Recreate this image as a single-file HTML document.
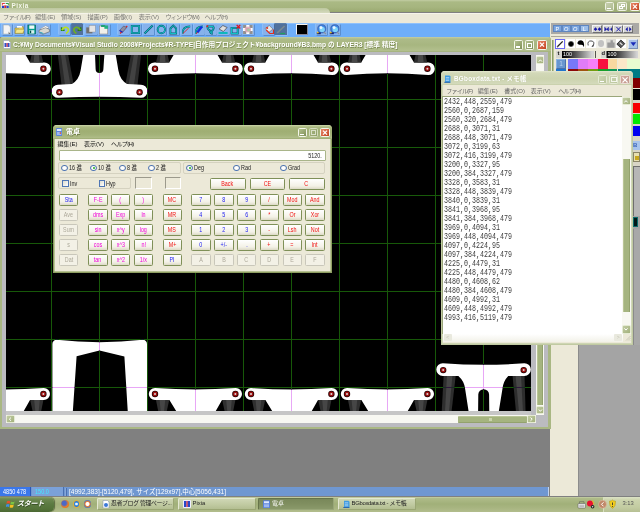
<!DOCTYPE html>
<html lang="ja">
<head>
<meta charset="utf-8">
<title>Pixia</title>
<style>
html,body{margin:0;padding:0;}
body{width:640px;height:512px;overflow:hidden;position:relative;background:#808080;
 font-family:"Liberation Sans","Noto Sans CJK JP",sans-serif;font-size:6px;color:#222;line-height:1;}
.a{position:absolute;box-sizing:border-box;}
.t{position:absolute;white-space:nowrap;line-height:1;}
/* main window */
#mtitle{left:0;top:0;width:640px;height:12px;background:linear-gradient(#c3cda4 0,#aab984 2px,#a6b57f 7px,#9dac74 11px,#95a56c 12px);}
#mmenu{left:0;top:12.5px;width:640px;height:11px;background:#ece9d8;border-top:1px solid #f6f4ea;}
#mtool{left:0;top:23.3px;width:550px;height:13.6px;background:#6eaef9;border-top:1px solid #8fc1fb;}
.wb{position:absolute;box-sizing:border-box;border:1px solid #f4f6ea;border-radius:1.5px;}
.wb.m{background:linear-gradient(135deg,#c6cfad,#aebb90);border-color:#eef1e2;}
.wb.g{background:linear-gradient(135deg,#b3c18e,#7f9058);}
.wb.r{background:linear-gradient(135deg,#e8896a,#c3421f);}
.ti{position:absolute;box-sizing:border-box;top:24.3px;height:11.2px;background:#86b2ec;box-shadow:0.6px 0.6px 0 #4f79b4,-0.5px -0.5px 0 #a9cdf8;}
.ti.p{background:#51719c;box-shadow:-0.6px -0.6px 0 #3a5578,0.5px 0.5px 0 #a9cdf8;}
/* child window */
#child{left:0;top:37px;width:551px;height:392px;background:#a9b783;border-radius:3px 3px 0 0;}
#ctitle{left:0;top:0;width:551px;height:15px;border-radius:3px 3px 0 0;background:linear-gradient(#c4cea5 0,#adbb88 2px,#a7b680 8px,#b3c08e 14px,#9aa974 15px);}
#cinner{left:1.6px;top:14.6px;width:546.6px;height:375.4px;background:#bbbbc0;}
#canvas{left:5px;top:55px;width:526px;height:355px;background:#000;overflow:hidden;}
/* status */
#status{left:0;top:487.3px;width:548.4px;height:9.2px;background:#6f97d1;}
/* taskbar */
#task{left:0;top:496.5px;width:640px;height:15.5px;background:linear-gradient(#c6d0a6 0,#aebb88 1.5px,#a1b079 7px,#a8b581 11px,#b3be8e 15.5px);}
.tb{position:absolute;box-sizing:border-box;top:498px;height:12px;border-radius:1.5px;background:linear-gradient(#cfd7b5,#bfc9a0 60%,#b3be91);border:1px solid #e4e8d2;border-bottom-color:#9aa674;border-right-color:#9aa674;}
/* calc */
#calc{left:52.5px;top:125px;width:279px;height:147.5px;background:#ece9d8;border-radius:4px 4px 0 0;border:1px solid #8e9e62;border-top:none;box-shadow:inset 0.7px 0 0 #a3b279,inset -0.7px 0 0 #a3b279,inset 0 -0.7px 0 #a3b279;}
#calctitle{left:-1px;top:0;width:279px;height:14px;border-radius:4px 4px 0 0;background:linear-gradient(#cbd5ab 0,#aab880 2px,#9fae73 6px,#a4b37a 10px,#b0bd89 13px,#93a268 14px);}
.cb{position:absolute;box-sizing:border-box;height:11px;border:1px solid #7f9058;border-radius:1.5px;background:linear-gradient(#fff,#f3f1e6 70%,#dcd9c6);text-align:center;font-size:6.4px;line-height:9.6px;}
.cb span{display:inline-block;transform:scaleX(.84);}
.cb.dis{border-color:#c9c7ba;color:#aca899 !important;background:#f3f1e6;}
.red{color:#f01010;}.blu{color:#1a1af0;}.mag{color:#f000d8;}
/* notepad */
#note{left:440.8px;top:70.8px;width:191.8px;height:273.8px;background:#ece9d8;border-radius:4px 4px 0 0;border:1px solid #c1caa2;border-top:none;box-shadow:inset 0.9px 0 0 #cdd5b3,inset -0.9px 0 0 #cdd5b3,inset 0 -0.9px 0 #cdd5b3;}
#notetitle{left:-1px;top:0;width:191.8px;height:14px;border-radius:4px 4px 0 0;background:linear-gradient(#e3e7cf 0,#d2d8b8 2px,#ccd3af 8px,#d4dabb 13px,#c0c8a0 14px);}
#notetext{left:0.7px;top:25.7px;width:180px;height:237.3px;background:#fff;border-top:1px solid #9aa67a;border-left:1px solid #9aa67a;}
#notetext pre{margin:0;position:absolute;left:0.3px;top:-0.5px;font-family:"Liberation Mono",monospace;font-size:9.5px;letter-spacing:0;line-height:9.015px;color:#3c3c3c;transform:scaleX(.7018);transform-origin:0 0;}
.grp{border:1px solid #d5d2c0;border-radius:2px;}
.snk{border:1px solid #9c9a8c;border-right-color:#fff;border-bottom-color:#fff;}
.rd{position:absolute;box-sizing:border-box;width:6.4px;height:6.4px;border-radius:50%;border:.8px solid #4f76b4;background:radial-gradient(#fff 40%,#dcdcd0);}
.rd.on::after{content:"";position:absolute;left:1.4px;top:1.4px;width:2px;height:2px;border-radius:50%;background:#20b020;}
.ck{position:absolute;box-sizing:border-box;width:6.5px;height:6.5px;border:.8px solid #4f76b4;background:linear-gradient(135deg,#dcdcd0,#fff);}
.wb.n{background:linear-gradient(135deg,#ccd4b2,#bac59d);border:.6px solid #e6ead6;}
.wb.nr{background:linear-gradient(135deg,#d2aaa0,#c3978c);border:.6px solid #ebdcd4;}
.nm{font-size:6px;color:#666;}
.sb{border:.5px solid #e4ead2;border-radius:1.5px;background:linear-gradient(135deg,#c2cca4,#a3b17c);}
.mm{top:14.4px;font-size:6.2px;color:#7a7a76;}
.pb{position:absolute;box-sizing:border-box;top:25px;width:8.6px;height:7.2px;border:.6px solid #5f86c0;color:#fff;font-size:5.6px;line-height:6.4px;text-align:center;}
.pg{position:absolute;box-sizing:border-box;top:25px;width:10.3px;height:7.5px;overflow:hidden;background:#d4d4d4;border:.6px solid #f4f4f4;border-right-color:#707070;border-bottom-color:#707070;}
.pg svg{position:absolute;left:0;top:0;}
.sw{position:absolute;top:58.8px;width:9.9px;height:10.4px;}
.sw.r2{top:69.2px;height:10px;}
.tb.on{background:linear-gradient(#79885a,#808f60 50%,#8a996a);border-color:#66744a;border-bottom-color:#98a678;border-right-color:#98a678;}
.tt{top:500.8px;font-size:5.9px;color:#222;}
</style>
</head>
<body>

<!-- ============ MAIN WINDOW CHROME ============ -->
<div class="a" id="mtitle"></div>
<svg class="a" style="left:.8px;top:1.6px" width="8.6" height="8.8" viewBox="0 0 10 10"><rect width="10" height="10" rx="1.2" fill="#eef0fa"/><path d="M1,1h3.500v3h-3.500z" fill="#e04040"/><path d="M5.500,1h3.500v3h-3.500z" fill="#30a040"/><rect x="1" y="4.500" width="2.600" height="4.500" fill="#2040c8"/><rect x="3.800" y="3" width="2.400" height="6" fill="#d02838"/><rect x="6.400" y="4.500" width="2.600" height="4.500" fill="#2040c8"/><rect x="2" y="2.200" width="6" height="1.600" fill="#fff"/></svg>
<div class="t" style="left:11.4px;top:2.8px;font-size:6.4px;font-weight:bold;color:#f4f6ea;letter-spacing:.5px">Pixia</div>
<div class="wb m" style="left:605px;top:1.8px;width:9.2px;height:9.4px"><i class="a" style="left:1.4px;top:5px;width:3.4px;height:1.4px;background:#fff"></i></div>
<div class="wb m" style="left:617.3px;top:1.8px;width:9.4px;height:9.4px"><i class="a" style="left:2.6px;top:1.2px;width:3.8px;height:3.4px;border:.8px solid #fff;border-top-width:1.2px"></i><i class="a" style="left:1.2px;top:2.8px;width:3.8px;height:3.4px;border:.8px solid #fff;border-top-width:1.2px;background:#b9c59e"></i></div>
<div class="wb r" style="left:629.5px;top:1.8px;width:10.5px;height:9.4px"><svg class="a" style="left:0;top:0" width="8" height="7.4" viewBox="0 0 8 7.4"><path d="M2,1.6L6,5.6M6,1.6L2,5.6" stroke="#fff" stroke-width="1.3"/></svg></div>

<div class="a" style="left:0;top:8px;width:330px;height:4.6px;border-radius:0 5px 0 0;background:linear-gradient(#bcc79e,#d5dabd)"></div>
<div class="a" id="mmenu"></div>
<div class="t mm" style="left:3px;letter-spacing:-0.8px">ファイル(F)</div>
<div class="t mm" style="left:35px;letter-spacing:-0.1px">編集(E)</div>
<div class="t mm" style="left:61px;letter-spacing:-0.1px">領域(S)</div>
<div class="t mm" style="left:87.5px;letter-spacing:-0.1px">描画(P)</div>
<div class="t mm" style="left:113.75px;letter-spacing:0px">画像(I)</div>
<div class="t mm" style="left:138.75px;letter-spacing:-0.1px">表示(V)</div>
<div class="t mm" style="left:165.5px;letter-spacing:-0.95px">ウィンドウ(W)</div>
<div class="t mm" style="left:204.5px;letter-spacing:-0.7px">ヘルプ(H)</div>

<div class="a" id="mtool"></div>
<!--ICONS-->
<div class="ti" style="left:2.3px;width:9.7px"><svg class="a" style="left:0;top:0" width="9.7" height="11" viewBox="0 0 11 11" preserveAspectRatio="none"><path d="M1.5,1h6l2,2v7h-8z" fill="#f4f4f4" stroke="#9aa" stroke-width=".5"/><path d="M7.5,7.5l2,2.5h-2z" fill="#666"/></svg></div>
<div class="ti" style="left:13.5px;width:10.9px"><svg class="a" style="left:0;top:0" width="10.9" height="11" viewBox="0 0 11 11" preserveAspectRatio="none"><path d="M1,4h4l1,-1.2h3.5v6.5h-8.5z" fill="#e8d060" stroke="#8a7a20" stroke-width=".5"/><path d="M1,9.3l1.5,-4h8l-1.5,4z" fill="#f4e68a" stroke="#8a7a20" stroke-width=".4"/><rect x="3" y="2" width="5" height="1.6" fill="#fff"/></svg></div>
<div class="ti" style="left:27.2px;width:9.6px"><svg class="a" style="left:0;top:0" width="9.6" height="11" viewBox="0 0 11 11" preserveAspectRatio="none"><rect x="1" y="1" width="9" height="9" fill="#00a090" stroke="#00504a" stroke-width=".6"/><rect x="2.6" y="1.4" width="5.8" height="3.4" fill="#f0f8f8"/><rect x="2.6" y="6.2" width="5.8" height="3.4" fill="#d8f0ee"/><rect x="3.2" y="6.6" width="1.6" height="2.6" fill="#00504a"/></svg></div>
<div class="ti" style="left:38.4px;width:12.0px"><svg class="a" style="left:0;top:0" width="12.0" height="11" viewBox="0 0 11 11" preserveAspectRatio="none"><path d="M2,5l5,-3.2l3,1.6l-5,3.4z" fill="#fff" stroke="#888" stroke-width=".4"/><path d="M1,6.2l6,-2.5l3.5,1.8v2.2l-6,2.6l-3.5,-1.8z" fill="#d8d8d0" stroke="#555" stroke-width=".5"/><path d="M2,8.2l3,1.4" stroke="#20a0c0" stroke-width="1"/></svg></div>
<div class="ti" style="left:59.0px;width:11.3px"><svg class="a" style="left:0;top:0" width="11.3" height="11" viewBox="0 0 11 11" preserveAspectRatio="none"><path d="M2.5,3.2v3h3" stroke="#2a8a10" stroke-width="1.5" fill="none"/><path d="M2.8,6q3,-4.5 6,-1.5q1.5,2.5 -2,5" stroke="#b8e020" stroke-width="1.6" fill="none"/></svg></div>
<div class="ti p" style="left:72.2px;width:11.3px"><svg class="a" style="left:0;top:0" width="11.3" height="11" viewBox="0 0 11 11" preserveAspectRatio="none"><path d="M8.5,3.2v3h-3" stroke="#2a7a10" stroke-width="1.5" fill="none"/><path d="M8.2,6q-3,-4.5 -6,-1.5q-1.5,2.5 2,5" stroke="#70b020" stroke-width="1.6" fill="none"/></svg></div>
<div class="ti" style="left:85.3px;width:11.3px"><svg class="a" style="left:0;top:0" width="11.3" height="11" viewBox="0 0 11 11" preserveAspectRatio="none"><rect x="1.2" y="3.4" width="6" height="6" fill="#707070"/><rect x="4" y="1.5" width="6" height="6.5" fill="#e4e4e4" stroke="#888" stroke-width=".4"/></svg></div>
<div class="ti" style="left:98.4px;width:11.3px"><svg class="a" style="left:0;top:0" width="11.3" height="11" viewBox="0 0 11 11" preserveAspectRatio="none"><rect x="1.5" y="2" width="8" height="8" fill="#f0f0ea" stroke="#777" stroke-width=".5"/><rect x="3" y="1" width="4" height="2" fill="#20a070"/><rect x="6.2" y="1.6" width="3.6" height="3.2" fill="#20b080"/></svg></div>
<div class="ti" style="left:117.5px;width:11.3px"><svg class="a" style="left:0;top:0" width="11.3" height="11" viewBox="0 0 11 11" preserveAspectRatio="none"><path d="M2,9.5l7,-7.5" stroke="#e02020" stroke-width="1.1"/><path d="M1.5,6.5l4,-4.5l3,1.5l-4,4.8z" fill="#9090a0" stroke="#404060" stroke-width=".5"/><path d="M1.5,6.5l3,1.8" stroke="#2020c0" stroke-width="1.2"/></svg></div>
<div class="ti" style="left:130.3px;width:10.7px"><svg class="a" style="left:0;top:0" width="10.7" height="11" viewBox="0 0 11 11" preserveAspectRatio="none"><rect x="1.8" y="2" width="7.6" height="7" stroke="#0a5a70" stroke-width="1.9" fill="none"/><rect x="1.8" y="2" width="7.6" height="7" stroke="#10d0d0" stroke-width="0.9" fill="none"/></svg></div>
<div class="ti" style="left:142.8px;width:11.2px"><svg class="a" style="left:0;top:0" width="11.2" height="11" viewBox="0 0 11 11" preserveAspectRatio="none"><path d="M1.5,9.5L9.5,1.5" stroke="#0a5a70" stroke-width="1.9" fill="none"/><path d="M1.5,9.5L9.5,1.5" stroke="#10d0d0" stroke-width="0.9" fill="none"/></svg></div>
<div class="ti" style="left:155.6px;width:10.7px"><svg class="a" style="left:0;top:0" width="10.7" height="11" viewBox="0 0 11 11" preserveAspectRatio="none"><circle cx="5.5" cy="5.5" r="3.8" stroke="#0a5a70" stroke-width="1.9" fill="none"/><circle cx="5.5" cy="5.5" r="3.8" stroke="#10d0d0" stroke-width="0.9" fill="none"/></svg></div>
<div class="ti" style="left:168.0px;width:10.5px"><svg class="a" style="left:0;top:0" width="10.5" height="11" viewBox="0 0 11 11" preserveAspectRatio="none"><path d="M2.5,9.5v-5l3,-3l3,3v5z" stroke="#0a5a70" stroke-width="1.9" fill="none"/><path d="M2.5,9.5v-5l3,-3l3,3v5z" stroke="#10d0d0" stroke-width="0.9" fill="none"/></svg></div>
<div class="ti" style="left:181.0px;width:10.6px"><svg class="a" style="left:0;top:0" width="10.6" height="11" viewBox="0 0 11 11" preserveAspectRatio="none"><path d="M2,9.5q-1,-7 7.5,-7" stroke="#0a5a70" stroke-width="1.9" fill="none"/><path d="M2,9.5q-1,-7 7.5,-7" stroke="#10d0d0" stroke-width="0.9" fill="none"/><path d="M2,9.5l6,-5.5" stroke="#e02020" stroke-width=".9"/></svg></div>
<div class="ti" style="left:193.5px;width:10.3px"><svg class="a" style="left:0;top:0" width="10.3" height="11" viewBox="0 0 11 11" preserveAspectRatio="none"><path d="M2,9.5q-1,-7 7.5,-7" stroke="#0a5a70" stroke-width="1.9" fill="none"/><path d="M2,9.5q-1,-7 7.5,-7" stroke="#10d0d0" stroke-width="0.9" fill="none"/><path d="M3.5,8.5l5,-6" stroke="#1030e0" stroke-width="2.6"/><path d="M2.2,9.8l1.8,-1.5" stroke="#e02020" stroke-width="1"/></svg></div>
<div class="ti" style="left:205.3px;width:10.7px"><svg class="a" style="left:0;top:0" width="10.7" height="11" viewBox="0 0 11 11" preserveAspectRatio="none"><path d="M2.5,2.5h6q1.5,2 -1.5,4.5v2.5q-2,-.5 -2,-3q-2.5,-1 -2.5,-4z" stroke="#0a5a70" stroke-width="1.9" fill="none"/><path d="M2.5,2.5h6q1.5,2 -1.5,4.5v2.5q-2,-.5 -2,-3q-2.5,-1 -2.5,-4z" stroke="#10d0d0" stroke-width="0.9" fill="none"/><circle cx="2.4" cy="2.2" r="1" fill="#e02020"/></svg></div>
<div class="ti" style="left:217.3px;width:11.7px"><svg class="a" style="left:0;top:0" width="11.7" height="11" viewBox="0 0 11 11" preserveAspectRatio="none"><path d="M2,5l3.5,-3.5l4,2l-3.5,4z" fill="#e0e0e0" stroke="#333" stroke-width=".6"/><path d="M1.5,9h8.5" stroke="#00b8b8" stroke-width="1.8"/></svg></div>
<div class="ti" style="left:229.7px;width:11.3px"><svg class="a" style="left:0;top:0" width="11.3" height="11" viewBox="0 0 11 11" preserveAspectRatio="none"><rect x="1.5" y="4" width="6" height="5.5" stroke="#0a5a70" stroke-width="1.9" fill="none"/><rect x="1.5" y="4" width="6" height="5.5" stroke="#10d0d0" stroke-width="0.9" fill="none"/><path d="M6.5,1l3.5,3.5M10,1l-3.5,3.5" stroke="#e01020" stroke-width="1.2"/></svg></div>
<div class="ti" style="left:242.3px;width:11.7px"><svg class="a" style="left:0;top:0" width="11.7" height="11" viewBox="0 0 11 11" preserveAspectRatio="none"><rect x="1" y="1" width="9" height="9" fill="#fff"/><path d="M1,1h3v3h-3zM7,1h3v3h-3zM4,4h3v3h-3zM1,7h3v3h-3zM7,7h3v3h-3z" fill="#909090"/><circle cx="5.5" cy="5.5" r="3" fill="#e0a0b0" opacity=".8"/><circle cx="6.2" cy="6" r="1.6" fill="#a0d0a0" opacity=".8"/></svg></div>
<div class="ti" style="left:262.5px;width:11.5px"><svg class="a" style="left:0;top:0" width="11.5" height="11" viewBox="0 0 11 11" preserveAspectRatio="none"><path d="M2,4.5l4,-3l3.5,3.5l-4,3.5z" fill="#e8e8e8" stroke="#555" stroke-width=".5"/><path d="M3,6l3.5,3.5h3.5v-4" fill="none" stroke="#e03020" stroke-width="1.1"/><circle cx="4" cy="4" r="1" fill="#e03020"/></svg></div>
<div class="ti p" style="left:275.3px;width:11.7px"><svg class="a" style="left:0;top:0" width="11.7" height="11" viewBox="0 0 11 11" preserveAspectRatio="none"><path d="M2,9l7,-7" stroke="#7a8a90" stroke-width="1.6"/><path d="M5,9.5h4.5" stroke="#20a060" stroke-width="1.2"/></svg></div>
<div class="ti" style="left:316.3px;width:10.9px"><svg class="a" style="left:0;top:0" width="10.9" height="11" viewBox="0 0 11 11" preserveAspectRatio="none"><circle cx="5.8" cy="4.8" r="4.1" fill="#3f86e4" stroke="#2a4a98" stroke-width=".6"/><circle cx="6.2" cy="5.4" r="2.7" fill="#7fd4f8"/><circle cx="5" cy="3.4" r="1.5" fill="#e8f6ff"/><path d="M7.8,7.8l2.2,2.2" stroke="#8890a0" stroke-width="1.2"/><path d="M.8,9.3h4" stroke="#18206c" stroke-width="1.8"/><circle cx="1.8" cy="8.6" r=".9" fill="#e8c020"/></svg></div>
<div class="ti" style="left:328.7px;width:11.1px"><svg class="a" style="left:0;top:0" width="11.1" height="11" viewBox="0 0 11 11" preserveAspectRatio="none"><circle cx="5.8" cy="4.8" r="4.1" fill="#3f86e4" stroke="#2a4a98" stroke-width=".6"/><circle cx="6.2" cy="5.4" r="2.7" fill="#7fd4f8"/><circle cx="5" cy="3.4" r="1.5" fill="#e8f6ff"/><path d="M7.8,7.8l2.2,2.2" stroke="#8890a0" stroke-width="1.2"/><path d="M.8,9.3h4" stroke="#18206c" stroke-width="1.8"/><circle cx="1.8" cy="8.6" r=".9" fill="#e8c020"/></svg></div>
<div class="a" style="left:296px;top:24.3px;width:11.6px;height:11.2px;background:#000;border:1px solid #f4f4f4;border-right-color:#889;border-bottom-color:#889"></div>
<!--/ICONS-->

<!-- right dock -->
<div class="a" style="left:550px;top:23px;width:90px;height:473px;background:#ece9d8"></div>
<div class="a" style="left:578px;top:100px;width:62px;height:396px;background:#a4a4a4;border-left:1px solid #8c8c8c"></div>
<div class="a" style="left:551px;top:23.4px;width:87.6px;height:11px;background:#aaa9a6"></div>
<div class="pb" style="left:553px;background:#7aa5df">P</div><div class="pb" style="left:562px;background:#7aa5df"><i>O</i></div><div class="pb" style="left:571px;background:#7aa5df"><i>O</i></div><div class="pb" style="left:580px;background:#9dbfea">L</div>
<div class="pg" style="left:592.2px"><svg width="9" height="6.3" viewBox="0 0 10 7"><path d="M.8,3.5L2.8,1.4V5.6zM4.8,3.5L2.8,1.4V5.6zM5.2,3.5L7.2,1.4V5.6zM9.2,3.5L7.2,1.4V5.6z" fill="#1a1aa8"/></svg></div>
<div class="pg" style="left:602.5px"><svg width="9" height="6.3" viewBox="0 0 10 7"><path d="M.8,1.4L2.9,3.5L.8,5.6zM5,1.4L2.9,3.5L5,5.6zM9.2,1.4L7.1,3.5L9.2,5.6zM5,3.5H7.1" fill="#1a1aa8" stroke="#1a1aa8" stroke-width=".5"/></svg></div>
<div class="pg" style="left:612.8px"><svg width="9" height="6.3" viewBox="0 0 10 7"><path d="M2.6,1L7.4,6M7.4,1L2.6,6" stroke="#1a1aa8" stroke-width="1.1"/></svg></div>
<div class="pg" style="left:623.1px"><svg width="9" height="6.3" viewBox="0 0 10 7"><path d="M1.6,3.5L4.2,1V6zM8.4,3.5L5.8,1V6z" fill="#1a1aa8"/></svg></div>
<div class="a" style="left:551px;top:36.3px;width:89px;height:1px;background:#aca899"></div>
<div class="a" style="left:552px;top:39.5px;width:2.2px;height:32px;background:#b7c394;border-left:.6px solid #8e9d66"></div>
<!-- tool icons -->
<div class="a" style="left:555.3px;top:38.5px;width:10.2px;height:10px;background:#fff;border:1px solid #6a6af4"><svg class="a" style="left:0;top:0" width="8.2" height="8" viewBox="0 0 8 8"><path d="M1,7L6.6,1.4" stroke="#222" stroke-width="1.3"/><path d="M1,7l1.6,-.5" stroke="#888" stroke-width=".8"/></svg></div>
<div class="a" style="left:566.2px;top:38.7px;width:9.2px;height:9.7px;background:#fff"><i class="a" style="left:1.6px;top:1.9px;width:6px;height:6px;border-radius:50%;background:radial-gradient(#000 40%,#777 70%,#fff)"></i></div>
<div class="a" style="left:575.8px;top:38.7px;width:9.6px;height:9.7px;background:#fff"><svg class="a" style="left:0;top:0" width="9.6" height="9.7" viewBox="0 0 9 9"><path d="M1.3,3.4q1,-2.6 4.2,-2.1q2.6,1 2,6.3q-1,-2.700 -3.100,-2.200q-3.100,0 -3.100,-2z" fill="#000"/></svg></div>
<div class="a" style="left:585.9px;top:38.7px;width:9.8px;height:9.7px;background:#fff"><svg class="a" style="left:0;top:0" width="9.8" height="9.7" viewBox="0 0 9 9"><path d="M6.600,6.600q2,-4.800 -2.100,-4.800q-3.600,0 -2.500,4.200" stroke="#333" stroke-width=".8" fill="none"/><path d="M5,7.4l2,-.5l-.6,-1.600" fill="#333"/></svg></div>
<div class="a" style="left:596.1px;top:38.7px;width:9.6px;height:9.7px;background:#f4f3ec"><i class="a" style="left:1.7px;top:1.8px;width:6.200px;height:6.200px;border-radius:50%;background:#c2c2c2"></i></div>
<div class="a" style="left:606.2px;top:38.7px;width:9.7px;height:9.7px;background:#dcdbd6"><svg class="a" style="left:0;top:0" width="9.7" height="9.7" viewBox="0 0 9 9"><path d="M1.200,3.200h3v-2h2.200v2h1.600v5h-6.800z" fill="#9a9a9a"/></svg></div>
<div class="a" style="left:616.4px;top:38.7px;width:9.7px;height:9.7px;background:#fff"><svg class="a" style="left:0;top:0" width="9.7" height="9.7" viewBox="0 0 9 9"><path d="M.8,4.800l3.700,-3.900l3.700,3.400l-3.700,3.900z" fill="#555" stroke="#111" stroke-width=".7"/><path d="M3.400,3.200l2.600,2.400" stroke="#ddd" stroke-width="1.100"/></svg></div>
<div class="a" style="left:627.6px;top:38.6px;width:10.7px;height:10px;background:#a9c0e6;border:1px solid #dfe8f6;border-right-color:#7a8fb4;border-bottom-color:#7a8fb4"><svg class="a" style="left:0;top:0" width="8.7" height="8" viewBox="0 0 8.7 8"><path d="M1.500,2.300h5.700l-2.850,3.800z" fill="#1a2ab8"/></svg></div>
<!-- t / d bars -->
<div class="a" style="left:556.2px;top:51px;width:37.6px;height:6.500px;background:linear-gradient(90deg,#d6d5d0 0,#d6d5d0 5.600px,#000 5.800px,#1c1c1c 12px,#d4d4d4 36px)"></div>
<div class="a" style="left:594.6px;top:50.600px;width:.8px;height:7.400px;background:#55554e"></div>
<div class="t" style="left:557.6px;top:51.200px;font-size:5.800px;font-weight:bold;color:#111">t</div><div class="t" style="left:563px;top:51.600px;font-size:5.400px;color:#fff">100</div>
<div class="a" style="left:600.6px;top:51px;width:37.800px;height:6.500px;background:linear-gradient(90deg,#d6d5d0 0,#d6d5d0 5.400px,#000 5.600px,#1c1c1c 12px,#d4d4d4 36px)"></div>
<div class="t" style="left:601.6px;top:51.100px;font-size:5.800px;font-weight:bold;color:#111">d</div><div class="t" style="left:607.6px;top:51.600px;font-size:5.400px;color:#fff">100</div>
<!-- swatches -->
<div class="a" style="left:556px;top:58.8px;width:10px;height:10.4px;background:#6896cf;border:1px solid #8cb2e4;border-right-color:#4a70ac;border-bottom-color:#4a70ac;color:#b8d0ee;font-size:6.5px;text-align:center;line-height:8px">1</div>
<div class="a" style="left:556px;top:69.2px;width:10px;height:10px;background:#1f74cc"></div>
<div class="sw" style="left:568px;background:#7878f8"></div><div class="sw" style="left:577.9px;background:#e07cf8"></div><div class="sw" style="left:587.8px;background:#f880f8"></div><div class="sw" style="left:597.7px;background:#f81040"></div><div class="sw" style="left:607.6px;background:#f8d8a0"></div><div class="sw" style="left:617.5px;background:#fce8c8"></div><div class="sw" style="left:627.4px;width:12.6px;background:#e8fcd0"></div>
<div class="sw r2" style="left:568px;background:#8c0808"></div><div class="sw r2" style="left:577.9px;background:#a05410"></div><div class="sw r2" style="left:587.8px;background:#749c10"></div><div class="sw r2" style="left:597.7px;background:#18a028"></div><div class="sw r2" style="left:607.6px;background:#109858"></div><div class="sw r2" style="left:617.5px;background:#008080"></div><div class="sw r2" style="left:627.4px;width:12.6px;background:#007c84"></div>
<div class="a" style="left:632.5px;top:78.2px;width:7.5px;height:10.2px;background:#800000"></div>
<div class="a" style="left:632.5px;top:88.6px;width:7.5px;height:11.2px;background:#000"></div>
<div class="a" style="left:632.5px;top:99.8px;width:7.5px;height:66px;background:#d8d5c6"></div>
<div class="a" style="left:633.3px;top:103.3px;width:6.7px;height:10px;background:#f80000"></div>
<div class="a" style="left:633.3px;top:114.4px;width:6.7px;height:10px;background:#00e800"></div>
<div class="a" style="left:633.3px;top:125.6px;width:6.7px;height:10px;background:#0000f0"></div>
<div class="a" style="left:633px;top:141px;width:7px;height:9px;background:#a8c4ec;color:#3a64b8;font-size:6px;font-weight:bold;line-height:9px">B</div>
<div class="a" style="left:633px;top:151.7px;width:7px;height:10px;background:#e8e0b0;border:1px solid #8a8466"><i class="a" style="left:1px;top:3.5px;width:4px;height:3.5px;background:#c8a820"></i></div>
<div class="a" style="left:632.5px;top:165.8px;width:7.5px;height:50px;background:#b6b6b6;border-left:1px solid #6e6e6e;border-top:1px solid #6e6e6e"></div>
<div class="a" style="left:632.8px;top:217px;width:5.6px;height:9.8px;background:#001818;border:1.2px solid #0a6a6a"></div>
<div class="a" style="left:632.6px;top:229px;width:7.4px;height:116px;background:#a8a8a8;border-left:1px solid #8a8a8a"></div>

<!-- ============ CHILD WINDOW ============ -->
<div class="a" id="child">
 <div class="a" id="ctitle"></div>
 <div class="a" id="cinner"></div>
 <svg class="a" style="left:3px;top:3px" width="8" height="9" viewBox="0 0 8 9"><path d="M0.5,0.5h5l2,2v6h-7z" fill="#fff" stroke="#8a93b8" stroke-width=".5"/><rect x="1.5" y="3" width="2" height="4" fill="#3050c8"/><rect x="3.5" y="3" width="1.3" height="4" fill="#d83040"/><rect x="4.8" y="3" width="1.7" height="4" fill="#3050c8"/></svg>
 <div class="t" id="ctext" style="left:13px;top:5.2px;font-size:6.72px;font-weight:bold;color:#fff;text-shadow:0.5px 0.5px 0 #7d8b56">C:¥My Documents¥Visual Studio 2008¥Projects¥R-TYPE|自作用プロジェクト¥background¥B3.bmp の LAYER3 [標準 精度]</div>
 <div class="wb g" style="left:513.5px;top:3px;width:9.5px;height:9.5px"><i class="a" style="left:1.5px;top:5px;width:3.5px;height:1.5px;background:#fff"></i></div>
 <div class="wb g" style="left:524.8px;top:3px;width:9.5px;height:9.5px"><i class="a" style="left:1.5px;top:1.5px;width:5px;height:5px;border:1px solid #fff;border-top-width:1.5px"></i></div>
 <div class="wb r" style="left:536.5px;top:3px;width:10px;height:9.5px"><svg class="a" style="left:0;top:0" width="8" height="7.5" viewBox="0 0 8 7.5"><path d="M2,1.6L6,5.6M6,1.6L2,5.6" stroke="#fff" stroke-width="1.3"/></svg></div>
</div>
<!--CANVAS-->
<svg class="a" style="left:6px;top:55px" width="525.4" height="356" viewBox="6 55 525.4 356">
<defs>
 <g id="dot"><circle r="3.2" fill="#2a0404"/><circle r="2.4" fill="#a01010"/><circle r="1" fill="#d8d8d8"/></g>
 <g id="segT">
  <path d="M6.8,62.4 L21.6,62.4 L26.6,54 L69.4,54 L74.4,62.4 L88.8,62.4 A6.4,6.3 0 0 1 88.8,75 Q48,71.6 6.8,75 A6.4,6.3 0 0 1 6.8,62.4Z" fill="#fff"/>
  <path d="M10.4,54 L19.8,54 L21.8,62.4 L8.4,62.4Z" fill="#2c2c2c"/><path d="M12.8,54 L17.2,54 L18,62.4 L12,62.4Z" fill="#484848"/>
  <path d="M76.2,54 L85.6,54 L87.6,62.4 L74.2,62.4Z" fill="#2c2c2c"/><path d="M78.8,54 L83.2,54 L84,62.4 L78,62.4Z" fill="#484848"/>
  <use href="#dot" x="7.4" y="68.7"/><use href="#dot" x="87.8" y="68.7"/>
 </g>
 <g id="segB">
  <path d="M7.4,388 Q48,390.8 88.2,388 A6.2,6 0 0 1 88.2,400 L74.4,400 L67.6,412 L29.2,412 L21.8,400 L7.4,400 A6.2,6 0 0 1 7.4,388Z" fill="#fff"/>
  <path d="M8.4,400 L21.6,400 L19,412 L10.8,412Z" fill="#303030"/><path d="M12,400 L17.6,400 L16.4,412 L13.2,412Z" fill="#464646"/>
  <path d="M74.6,400 L87.8,400 L85.4,412 L77.2,412Z" fill="#303030"/><path d="M78.6,400 L84.2,400 L83,412 L79.8,412Z" fill="#464646"/>
  <use href="#dot" x="7.4" y="394"/><use href="#dot" x="87.8" y="394"/>
 </g>
</defs>
<rect x="5" y="55" width="526" height="356" fill="#000"/>
<!-- top row -->
<use href="#segT" x="-44.4"/>
<use href="#segT" x="147.6"/><use href="#segT" x="243.6"/><use href="#segT" x="339.6"/>
<!-- T shape top -->
<path d="M57.8,54 L68,54 L73.75,85 L61.5,85Z" fill="#2a2a2a"/><path d="M60.8,54 L65,54 L70.5,85 L65,85Z" fill="#424242"/>
<path d="M141.2,54 L131,54 L125.25,85 L137.5,85Z" fill="#2a2a2a"/><path d="M138.2,54 L134,54 L128.5,85 L134,85Z" fill="#424242"/>
<path d="M83.4,54 L80.6,70.6 Q79,80 72,84 L58,84.7 A6.4,6.55 0 0 0 58,97.8 Q99.5,95.6 141,97.8 A6.4,6.55 0 0 0 141,84.7 L127,84 Q120,80 118.4,70.6 L115.6,54Z" fill="#fff"/>
<path d="M95,54 L95.6,69 A3.9,4 0 0 0 103.4,69 L104.4,54Z" fill="#000"/>
<use href="#dot" x="59.4" y="92.2"/><use href="#dot" x="139.6" y="92.2"/>
<!-- bottom row -->
<use href="#segB" x="-44.4"/>
<use href="#segB" x="147.6"/><use href="#segB" x="243.6"/><use href="#segB" x="339.6"/>
<!-- arch -->
<path d="M52.4,412 L52.4,344 A4.2,4.2 0 0 1 56.6,339.8 Q99.5,344.6 142.8,339.8 A4.2,4.2 0 0 1 147,344 L147,412 L127.8,412 L124.4,356.6 L99.5,350.4 L76.600,356.300 L72.800,412Z" fill="#fff"/>
<!-- table -->
<path d="M443.7,375 L455.8,375 L451.5,412 L441.7,412Z" fill="#2e2e2e"/><path d="M447,375 L452.5,375 L449,412 L445,412Z" fill="#464646"/>
<path d="M524.5,375 L512.5,375 L516,412 L525.6,412Z" fill="#2e2e2e"/><path d="M521,375 L515.5,375 L519,412 L523,412Z" fill="#464646"/>
<path d="M442.8,363.2 Q483.5,366.4 524.4,363.2 A6.5,6.4 0 0 1 524.4,376 L508.2,376 Q503.5,381 502.6,388 L498.7,412 L468.7,412 L465,388 Q464,381 458.4,376 L442.8,376 A6.5,6.4 0 0 1 442.8,363.2Z" fill="#fff"/>
<path d="M478.1,412 L478.3,394.5 A5.4,5.2 0 0 1 489.1,394.5 L489.3,412Z" fill="#000"/>
<use href="#dot" x="443.2" y="370.1"/><use href="#dot" x="523.7" y="370.1"/>
<!-- grid (xor) -->
<g style="mix-blend-mode:difference" stroke="#185a0a" stroke-width="1" fill="none">
 <path d="M51.5,55V411M99.5,55V411M147.5,55V411M195.5,55V411M243.5,55V411M291.5,55V411M339.5,55V411M387.5,55V411M435.5,55V411M483.5,55V411"/>
 <path d="M5,99.5H531M5,147.5H531M5,195.5H531M5,243.5H531M5,291.5H531M5,339.5H531M5,387.5H531"/>
</g>
</svg>
<!--/CANVAS-->
<!-- child scrollbars -->
<div class="a" style="left:2px;top:51.6px;width:546px;height:3.8px;background:#bbbbc0"></div>
<div class="a" style="left:531.4px;top:55px;width:4.6px;height:356px;background:#bbbbc0"></div>
<div class="a" style="left:536px;top:55.4px;width:7.8px;height:359.4px;background:#f8f8f2"></div>
<div class="a sb" style="left:536px;top:55.6px;width:7.8px;height:8px"><svg class="a" style="left:0;top:0" width="7" height="7" viewBox="0 0 7 7"><path d="M1.8,4.6L3.4,2.8L5,4.6" stroke="#fff" stroke-width="1" fill="none"/></svg></div>
<div class="a" style="left:536.8px;top:300px;width:6.6px;height:104.5px;background:#a5b47f;border-left:1px solid #b9c596;border-right:1px solid #93a26d"></div>
<div class="a sb" style="left:536px;top:405.6px;width:7.8px;height:8.6px"><svg class="a" style="left:0;top:0" width="7" height="7" viewBox="0 0 7 7"><path d="M1.8,2.5L3.4,4.3L5,2.5" stroke="#fff" stroke-width="1" fill="none"/></svg></div>
<div class="a" style="left:6px;top:411px;width:525.4px;height:3.8px;background:#c6c6c6"></div>
<div class="a" style="left:6px;top:414.8px;width:530px;height:8.4px;background:#f8f8f2"></div>
<div class="a sb" style="left:6.4px;top:415.2px;width:8.2px;height:7.8px"><svg class="a" style="left:0;top:0" width="6.5" height="6.5" viewBox="0 0 6.5 6.5"><path d="M4,1.6L2.3,3.2L4,4.8" stroke="#fff" stroke-width="1" fill="none"/></svg></div>
<div class="a" style="left:457.5px;top:415.8px;width:69px;height:6.8px;background:#a5b47f;border-top:1px solid #b9c596;border-bottom:1px solid #93a26d;border-radius:1px"></div>
<div class="a" style="left:489px;top:417.8px;width:4px;height:3px;background:repeating-linear-gradient(90deg,#c9d3ab 0 .6px,transparent .6px 1.2px)"></div>
<div class="a sb" style="left:527.4px;top:415.2px;width:8.2px;height:7.8px"><svg class="a" style="left:0;top:0" width="6.5" height="6.5" viewBox="0 0 6.5 6.5"><path d="M2.5,1.6L4.2,3.2L2.5,4.8" stroke="#fff" stroke-width="1" fill="none"/></svg></div>



<!-- ============ STATUS ============ -->
<div class="a" id="status"></div>
<div class="a" style="left:0;top:487.3px;width:31px;height:9.2px;background:#3b77ea;border-right:1px solid #2a58b8"></div>
<div class="t" style="left:3.2px;top:488.8px;font-size:6.3px;color:#fff;transform:scaleX(.88);transform-origin:0 50%">4850 478</div>
<div class="a" style="left:32px;top:487.3px;width:31.5px;height:9.2px;background:#7ba1d9;border-right:1px solid #4a70b0"></div>
<div class="t" style="left:35px;top:488.8px;font-size:6.3px;color:#45e8ff;transform:scaleX(.88);transform-origin:0 50%">150.0</div>
<div class="a" style="left:64.5px;top:487.6px;width:2.5px;height:8.6px;background:#86a7d8;border-right:.6px solid #4a70b0"></div>
<div class="t" style="left:69px;top:488.6px;font-size:6.5px;color:#fff;letter-spacing:0px" id="sttext">[4992,383]-[5120,479], サイズ[129x97],中心[5056,431]</div>
<div class="a" style="left:547.6px;top:487.3px;width:1.1px;height:9.2px;background:#c4d4ee"></div>

<!-- ============ TASKBAR ============ -->
<div class="a" id="task"></div>
<div class="a" style="left:0;top:496.5px;width:54px;height:15.5px;border-radius:0 5px 5px 0;background:linear-gradient(#8aa06a 0,#6c8850 2px,#5b7a42 7px,#547339 12px,#4a6632 15.5px);box-shadow:1px 0 1px #5a6a40"></div>
<svg class="a" style="left:5.5px;top:499px" width="10" height="10" viewBox="0 0 10 10"><path d="M1,2.2q1.8,-1 3.4,0l-.7,2.6q-1.6,-.9 -3.3,0z" fill="#e8502a"/><path d="M5,2.4q1.7,1 3.6,0l-.7,2.6q-1.8,1 -3.5,0z" fill="#7cc242"/><path d="M.3,5.4q1.8,-1 3.3,0l-.7,2.7q-1.5,-1 -3.3,0z" fill="#3f8fe0"/><path d="M4.3,5.6q1.7,1 3.5,0l-.7,2.6q-1.8,1 -3.5,0z" fill="#f4c020"/></svg>
<div class="t" style="left:16.8px;top:500.2px;font-size:7.3px;font-weight:bold;font-style:italic;color:#fff;letter-spacing:-0.55px;text-shadow:.5px .5px 0 #354a22">スタート</div>
<!-- quick launch -->
<i class="a" style="left:60.5px;top:499.6px;width:8.4px;height:8.4px;border-radius:50%;background:radial-gradient(circle at 40% 40%,#4a68c8 30%,#f08020 60%,#d85010)"></i>
<i class="a" style="left:72.8px;top:500px;width:7.6px;height:7.6px;border-radius:50%;background:radial-gradient(circle,#e8f0ff 25%,#3898e8 40%,#2a70d0 70%);border:.6px solid #e8b030"></i>
<i class="a" style="left:83.5px;top:500px;width:7.8px;height:7.8px;border-radius:50%;background:radial-gradient(circle,#fff 30%,#f08030 45%,#3a70c8 75%)"></i>
<!-- task buttons -->
<div class="tb" style="left:97px;width:77px"></div>
<svg class="a" style="left:101.5px;top:499.8px" width="8" height="8.5" viewBox="0 0 8 8.5"><path d="M1,.5h4.5l1.5,1.5v6h-6z" fill="#fff" stroke="#7888a8" stroke-width=".5"/><circle cx="4" cy="5" r="2" fill="#3a78d8"/></svg>
<div class="t tt" style="left:111px;letter-spacing:-0.35px">忍者ブログ 管理ページ...</div>
<div class="tb" style="left:177.5px;width:78px"></div>
<svg class="a" style="left:182.5px;top:500px" width="8" height="8" viewBox="0 0 8 8"><rect width="8" height="8" rx="1" fill="#eef"/><rect x="1" y="1" width="2.4" height="6" fill="#2848c8"/><rect x="3.4" y="1" width="1.4" height="6" fill="#d83040"/><rect x="4.8" y="1" width="2.2" height="6" fill="#2848c8"/></svg>
<div class="t tt" style="left:192.5px">Pixia</div>
<div class="tb on" style="left:258px;width:76px"></div>
<svg class="a" style="left:263px;top:499.8px" width="7" height="8.5" viewBox="0 0 7 8"><rect width="7" height="8" rx="1" fill="#5a82dc"/><rect x="1" y="1" width="5" height="2" fill="#dfe9ff"/><rect x="1" y="4" width="5" height="3" fill="#9db8f0"/></svg>
<div class="t tt" style="left:272px;color:#fff">電卓</div>
<div class="tb" style="left:337.5px;width:78px"></div>
<svg class="a" style="left:342.5px;top:499.8px" width="7" height="8.5" viewBox="0 0 7 8"><path d="M1,0.5h4.5l1,1v6h-5.5z" fill="#3f9be0"/><path d="M1.8,2.5h3.4M1.8,4h3.4M1.8,5.5h3.4" stroke="#cfe8ff" stroke-width=".6"/><rect x="0.3" y="6.8" width="6" height="1" fill="#2a62a8"/></svg>
<div class="t tt" style="left:351.5px;letter-spacing:-0.28px">BGboxdata.txt - メモ帳</div>
<!-- tray -->
<div class="a" style="left:603px;top:496.5px;width:37px;height:15.5px;background:linear-gradient(#dde3c6 0,#ccd4ad 3px,#c3cca2 10px,#b5bf92 15.5px);border-left:1px solid #d8dfc0"></div>
<svg class="a" style="left:577px;top:499px" width="64" height="11" viewBox="577 499 64 11">
 <rect x="578" y="503.5" width="7.5" height="4.6" rx=".8" fill="#e8e8e8" stroke="#555" stroke-width=".5"/><path d="M579.5,503.3v-1.6h4.5v1.6" fill="none" stroke="#555" stroke-width=".5"/><path d="M579.3,505.3h5M579.3,506.6h5" stroke="#888" stroke-width=".5"/>
 <circle cx="590" cy="503.6" r="3" fill="#e81030"/><path d="M592.5,500.5l1.5,4" stroke="#f0b020" stroke-width="1"/><circle cx="592.6" cy="506.8" r="1.8" fill="#222"/><circle cx="592.6" cy="506.8" r=".8" fill="#ddd"/>
 <circle cx="602.5" cy="504.3" r="4" fill="#c08868" stroke="#e0c0a8" stroke-width=".6"/><path d="M603.5,502.3l-2,2l2,2" stroke="#fff" stroke-width="1" fill="none"/>
 <path d="M609.5,501.2q2.6,-.2 3,-1.2q.4,1 3,1.2q.2,5.5 -3,7.2q-3.2,-1.700 -3,-7.2z" fill="#f4d020" stroke="#a08810" stroke-width=".5"/><path d="M612.5,502.5v2.6M612.5,506v.9" stroke="#333" stroke-width=".9"/>
</svg>
<div class="t" style="left:622.5px;top:501.3px;font-size:5.8px;color:#555">3:13</div>

<!-- ============ CALC ============ -->
<div class="a" id="calc">
 <div class="a" id="calctitle"></div>
 <svg class="a" style="left:2.2px;top:3px" width="6.2" height="8" viewBox="0 0 7 8" preserveAspectRatio="none"><rect width="7" height="8" rx="1" fill="#5a82dc"/><rect x="1" y="1" width="5" height="2" fill="#dfe9ff"/><rect x="1" y="4" width="5" height="3" fill="#9db8f0"/><rect x="4.2" y="4.3" width="1.5" height="1.5" fill="#e05030"/></svg>
 <div class="t" style="left:12.5px;top:3.2px;font-size:7px;font-weight:bold;color:#fff;text-shadow:0.5px 0.5px 0 #66753f">電卓</div>
 <div class="wb g" style="left:244px;top:2.5px;width:9.5px;height:9.5px"><i class="a" style="left:1.5px;top:5px;width:3.5px;height:1.5px;background:#fff"></i></div>
 <div class="wb g" style="left:255px;top:2.5px;width:9.5px;height:9.5px;opacity:.6"><i class="a" style="left:1.5px;top:1.5px;width:5px;height:5px;border:1px solid #fff;border-top-width:1.5px"></i></div>
 <div class="wb r" style="left:266px;top:2.5px;width:10px;height:9.5px"><svg class="a" style="left:0;top:0" width="8" height="7.5" viewBox="0 0 8 7.5"><path d="M2,1.6L6,5.6M6,1.6L2,5.6" stroke="#fff" stroke-width="1.3"/></svg></div>
 <div class="t" style="left:4px;top:16px;font-size:6px;color:#111">編集(E)</div>
 <div class="t" style="left:30.5px;top:16px;font-size:6px;color:#111">表示(V)</div>
 <div class="t" style="left:57.5px;top:16px;font-size:6px;color:#111;letter-spacing:-0.6px">ヘルプ(H)</div>
 <div class="a" style="left:5px;top:25.2px;width:267.5px;height:10.6px;background:#fff;border:1px solid #a9b58a;border-radius:1px"></div>
 <div class="t" style="right:9px;top:27.6px;font-size:6.3px;color:#222;transform:scaleX(.86);transform-origin:100% 50%">5120.</div>
 <div class="a grp" style="left:4.90px;top:37.3px;width:123px;height:11.4px"></div>
 <div class="a grp" style="left:129.40px;top:37.3px;width:142px;height:11.4px"></div>
 <i class="rd" style="left:7.90px;top:40px"></i><div class="t" style="left:15.5px;top:40.1px;font-size:6.3px;transform:scaleX(.86);transform-origin:0 50%">16 進</div>
 <i class="rd on" style="left:36.90px;top:40px"></i><div class="t" style="left:44.5px;top:40.1px;font-size:6.3px;transform:scaleX(.86);transform-origin:0 50%">10 進</div>
 <i class="rd" style="left:65.90px;top:40px"></i><div class="t" style="left:73.5px;top:40.1px;font-size:6.3px;transform:scaleX(.86);transform-origin:0 50%">8 進</div>
 <i class="rd" style="left:94.65px;top:40px"></i><div class="t" style="left:102.25px;top:40.1px;font-size:6.3px;transform:scaleX(.86);transform-origin:0 50%">2 進</div>
 <i class="rd on" style="left:132.90px;top:40px"></i><div class="t" style="left:140.5px;top:40.1px;font-size:6.3px;transform:scaleX(.86);transform-origin:0 50%">Deg</div>
 <i class="rd" style="left:179.65px;top:40px"></i><div class="t" style="left:187.5px;top:40.1px;font-size:6.3px;transform:scaleX(.86);transform-origin:0 50%">Rad</div>
 <i class="rd" style="left:226.90px;top:40px"></i><div class="t" style="left:234.5px;top:40.1px;font-size:6.3px;transform:scaleX(.86);transform-origin:0 50%">Grad</div>
 <div class="a grp" style="left:4.60px;top:52.2px;width:73px;height:12px"></div>
 <i class="ck" style="left:8.5px;top:55px"></i><div class="t" style="left:16px;top:55.5px;font-size:6.3px;transform:scaleX(.86);transform-origin:0 50%">Inv</div>
 <i class="ck" style="left:45px;top:55px"></i><div class="t" style="left:52.5px;top:55.5px;font-size:6.3px;transform:scaleX(.86);transform-origin:0 50%">Hyp</div>
 <div class="a snk" style="left:81.5px;top:52.2px;width:16.5px;height:12px"></div>
 <div class="a snk" style="left:111px;top:52.2px;width:16.5px;height:12px"></div>
 <div class="cb blu" style="left:5.25px;top:69.00px;width:19.5px;height:12px"><span>Sta</span></div>
 <div class="cb mag" style="left:34.50px;top:69.00px;width:19.5px;height:12px"><span>F-E</span></div>
 <div class="cb mag" style="left:57.25px;top:69.00px;width:19.5px;height:12px"><span>(</span></div>
 <div class="cb mag" style="left:80.00px;top:69.00px;width:19.5px;height:12px"><span>)</span></div>
 <div class="cb red" style="left:109.00px;top:69.00px;width:19.5px;height:12px"><span>MC</span></div>
 <div class="cb blu" style="left:137.50px;top:69.00px;width:19.5px;height:12px"><span>7</span></div>
 <div class="cb blu" style="left:160.50px;top:69.00px;width:19.5px;height:12px"><span>8</span></div>
 <div class="cb blu" style="left:183.25px;top:69.00px;width:19.5px;height:12px"><span>9</span></div>
 <div class="cb red" style="left:206.00px;top:69.00px;width:19.5px;height:12px"><span>/</span></div>
 <div class="cb red" style="left:229.00px;top:69.00px;width:19.5px;height:12px"><span>Mod</span></div>
 <div class="cb red" style="left:251.50px;top:69.00px;width:19.5px;height:12px"><span>And</span></div>
 <div class="cb  dis" style="left:5.25px;top:84.00px;width:19.5px;height:12px"><span>Ave</span></div>
 <div class="cb mag" style="left:34.50px;top:84.00px;width:19.5px;height:12px"><span>dms</span></div>
 <div class="cb mag" style="left:57.25px;top:84.00px;width:19.5px;height:12px"><span>Exp</span></div>
 <div class="cb mag" style="left:80.00px;top:84.00px;width:19.5px;height:12px"><span>ln</span></div>
 <div class="cb red" style="left:109.00px;top:84.00px;width:19.5px;height:12px"><span>MR</span></div>
 <div class="cb blu" style="left:137.50px;top:84.00px;width:19.5px;height:12px"><span>4</span></div>
 <div class="cb blu" style="left:160.50px;top:84.00px;width:19.5px;height:12px"><span>5</span></div>
 <div class="cb blu" style="left:183.25px;top:84.00px;width:19.5px;height:12px"><span>6</span></div>
 <div class="cb red" style="left:206.00px;top:84.00px;width:19.5px;height:12px"><span>*</span></div>
 <div class="cb red" style="left:229.00px;top:84.00px;width:19.5px;height:12px"><span>Or</span></div>
 <div class="cb red" style="left:251.50px;top:84.00px;width:19.5px;height:12px"><span>Xor</span></div>
 <div class="cb  dis" style="left:5.25px;top:99.00px;width:19.5px;height:12px"><span>Sum</span></div>
 <div class="cb mag" style="left:34.50px;top:99.00px;width:19.5px;height:12px"><span>sin</span></div>
 <div class="cb mag" style="left:57.25px;top:99.00px;width:19.5px;height:12px"><span>x^y</span></div>
 <div class="cb mag" style="left:80.00px;top:99.00px;width:19.5px;height:12px"><span>log</span></div>
 <div class="cb red" style="left:109.00px;top:99.00px;width:19.5px;height:12px"><span>MS</span></div>
 <div class="cb blu" style="left:137.50px;top:99.00px;width:19.5px;height:12px"><span>1</span></div>
 <div class="cb blu" style="left:160.50px;top:99.00px;width:19.5px;height:12px"><span>2</span></div>
 <div class="cb blu" style="left:183.25px;top:99.00px;width:19.5px;height:12px"><span>3</span></div>
 <div class="cb red" style="left:206.00px;top:99.00px;width:19.5px;height:12px"><span>-</span></div>
 <div class="cb red" style="left:229.00px;top:99.00px;width:19.5px;height:12px"><span>Lsh</span></div>
 <div class="cb red" style="left:251.50px;top:99.00px;width:19.5px;height:12px"><span>Not</span></div>
 <div class="cb  dis" style="left:5.25px;top:114.00px;width:19.5px;height:12px"><span>s</span></div>
 <div class="cb mag" style="left:34.50px;top:114.00px;width:19.5px;height:12px"><span>cos</span></div>
 <div class="cb mag" style="left:57.25px;top:114.00px;width:19.5px;height:12px"><span>x^3</span></div>
 <div class="cb mag" style="left:80.00px;top:114.00px;width:19.5px;height:12px"><span>n!</span></div>
 <div class="cb red" style="left:109.00px;top:114.00px;width:19.5px;height:12px"><span>M+</span></div>
 <div class="cb blu" style="left:137.50px;top:114.00px;width:19.5px;height:12px"><span>0</span></div>
 <div class="cb blu" style="left:160.50px;top:114.00px;width:19.5px;height:12px"><span>+/-</span></div>
 <div class="cb blu" style="left:183.25px;top:114.00px;width:19.5px;height:12px"><span>.</span></div>
 <div class="cb red" style="left:206.00px;top:114.00px;width:19.5px;height:12px"><span>+</span></div>
 <div class="cb red" style="left:229.00px;top:114.00px;width:19.5px;height:12px"><span>=</span></div>
 <div class="cb red" style="left:251.50px;top:114.00px;width:19.5px;height:12px"><span>Int</span></div>
 <div class="cb  dis" style="left:5.25px;top:129.00px;width:19.5px;height:12px"><span>Dat</span></div>
 <div class="cb mag" style="left:34.50px;top:129.00px;width:19.5px;height:12px"><span>tan</span></div>
 <div class="cb mag" style="left:57.25px;top:129.00px;width:19.5px;height:12px"><span>x^2</span></div>
 <div class="cb mag" style="left:80.00px;top:129.00px;width:19.5px;height:12px"><span>1/x</span></div>
 <div class="cb blu" style="left:109.00px;top:129.00px;width:19.5px;height:12px"><span>PI</span></div>
 <div class="cb  dis" style="left:137.50px;top:129.00px;width:19.5px;height:12px"><span>A</span></div>
 <div class="cb  dis" style="left:160.50px;top:129.00px;width:19.5px;height:12px"><span>B</span></div>
 <div class="cb  dis" style="left:183.25px;top:129.00px;width:19.5px;height:12px"><span>C</span></div>
 <div class="cb  dis" style="left:206.00px;top:129.00px;width:19.5px;height:12px"><span>D</span></div>
 <div class="cb  dis" style="left:229.00px;top:129.00px;width:19.5px;height:12px"><span>E</span></div>
 <div class="cb  dis" style="left:251.50px;top:129.00px;width:19.5px;height:12px"><span>F</span></div>
 <div class="cb red" style="left:156.00px;top:53px;width:36.00px;height:12px"><span>Back</span></div>
 <div class="cb red" style="left:196.00px;top:53px;width:35.50px;height:12px"><span>CE</span></div>
 <div class="cb red" style="left:235.25px;top:53px;width:35.75px;height:12px"><span>C</span></div>
</div>

<!-- ============ NOTEPAD ============ -->
<div class="a" id="note">
 <div class="a" id="notetitle"></div>
 <svg class="a" style="left:2.5px;top:4px" width="7" height="8" viewBox="0 0 7 8"><path d="M1,0.5h4.5l1,1v6h-5.5z" fill="#3f9be0"/><path d="M1.8,2.5h3.4M1.8,4h3.4M1.8,5.5h3.4" stroke="#cfe8ff" stroke-width=".6"/><rect x="0.3" y="6.8" width="6" height="1" fill="#2a62a8"/></svg>
 <div class="t" style="left:12.2px;top:5.4px;font-size:6.5px;font-weight:bold;color:#fff;letter-spacing:.15px;text-shadow:0.4px 0.4px 0 #b4bc94">BGboxdata.txt - メモ帳</div>
 <div class="wb n" style="left:156px;top:4.1px;width:8.9px;height:9.1px"><i class="a" style="left:1.2px;top:5px;width:3.6px;height:1.5px;background:#fff"></i></div>
 <div class="wb n" style="left:167.3px;top:4.1px;width:8.8px;height:9.1px"><i class="a" style="left:1.3px;top:1.3px;width:5.2px;height:5.2px;border:.9px solid #f4f6ec;border-top-width:1.6px"></i></div>
 <div class="wb nr" style="left:178.6px;top:4.1px;width:9.3px;height:9.1px"><svg class="a" style="left:0;top:0" width="8.1" height="7.9" viewBox="0 0 8.1 7.9"><path d="M1.5,1.4L6.6,6.5M6.6,1.4L1.5,6.5" stroke="#fff" stroke-width="1.15"/></svg></div>
 <div class="t nm" style="left:4.5px;top:17px;letter-spacing:-0.8px">ファイル(F)</div>
 <div class="t nm" style="left:36px;top:17px">編集(E)</div>
 <div class="t nm" style="left:62.5px;top:17px">書式(O)</div>
 <div class="t nm" style="left:89px;top:17px">表示(V)</div>
 <div class="t nm" style="left:116.5px;top:17px;letter-spacing:-0.7px">ヘルプ(H)</div>
 <div class="a" id="notetext"><pre>2432,448,2559,479
2560,0,2687,159
2560,320,2684,479
2688,0,3071,31
2688,448,3071,479
3072,0,3199,63
3072,416,3199,479
3200,0,3327,95
3200,384,3327,479
3328,0,3583,31
3328,448,3839,479
3840,0,3839,31
3841,0,3968,95
3841,384,3968,479
3969,0,4094,31
3969,448,4094,479
4097,0,4224,95
4097,384,4224,479
4225,0,4479,31
4225,448,4479,479
4480,0,4608,62
4480,384,4608,479
4609,0,4992,31
4609,448,4992,479
4993,416,5119,479</pre></div>
 <!-- v scrollbar -->
 <div class="a" style="left:180.6px;top:26px;width:8.6px;height:237px;background:#f8f8f2"></div>
 <div class="a sb" style="left:180.7px;top:26.2px;width:8.2px;height:8.2px"><svg class="a" style="left:0;top:0" width="6" height="6.5" viewBox="0 0 6 6.5"><path d="M1.4,4.4L3,2.6L4.6,4.4" stroke="#fff" stroke-width="1" fill="none"/></svg></div>
 <div class="a" style="left:181.5px;top:88px;width:6.6px;height:153.2px;background:#a5b47f;border-left:1px solid #b9c596;border-right:1px solid #93a26d"></div>
 <div class="a sb" style="left:180.7px;top:254.7px;width:8.2px;height:8.2px"><svg class="a" style="left:0;top:0" width="6" height="6.5" viewBox="0 0 6 6.5"><path d="M1.4,2.3L3,4.1L4.6,2.3" stroke="#fff" stroke-width="1" fill="none"/></svg></div>
 <!-- h scrollbar -->
 <div class="a" style="left:1px;top:263px;width:180px;height:8.2px;background:linear-gradient(#fff,#f2f1e8)"></div>
 <div class="a" style="left:2px;top:263.6px;width:8px;height:7px;background:#e9e9de;border-radius:1px;color:#c4c4b4;font-size:5px;line-height:7px;text-align:center">&lt;</div>
 <div class="a" style="left:172.5px;top:263.6px;width:8px;height:7px;background:#e9e9de;border-radius:1px;color:#c4c4b4;font-size:5px;line-height:7px;text-align:center">&gt;</div>
 <svg class="a" style="left:183px;top:264px" width="6" height="6" viewBox="0 0 6 6"><path d="M5.5,1L1,5.5M5.5,3L3,5.5M5.5,5L5,5.5" stroke="#c4c2b0" stroke-width=".8"/></svg>
</div>

</body>
</html>
